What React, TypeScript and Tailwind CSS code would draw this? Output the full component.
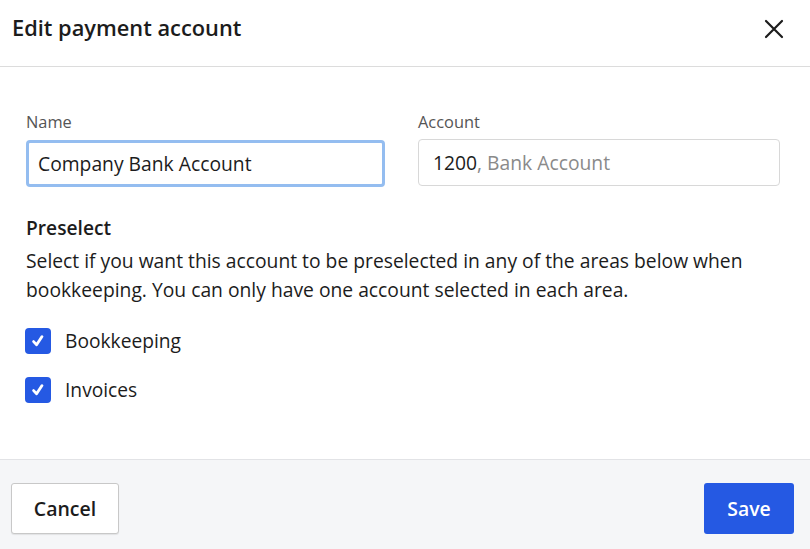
import React from "react";

export default function App() {
  return (
    <div
      className="w-[810px] h-[549px] bg-white flex flex-col text-[#1c1c1c] overflow-hidden"
      style={{ fontFamily: '"Open Sans", sans-serif' }}
    >
      <div className="h-[67px] flex items-center justify-between pl-[12px] pr-[25px] border-b border-[#dcdcdc] shrink-0">
        <h1 className="text-[21.8px] font-semibold leading-none -mt-[10px]">Edit payment account</h1>
        <button className="w-[22px] h-[22px] flex items-center justify-center -mt-[8px]" aria-label="Close">
          <svg width="20" height="20" viewBox="0 0 20 20" fill="none" stroke="#1c1c1c" strokeWidth="2.2" strokeLinecap="round">
            <path d="M2 2 L18 18 M18 2 L2 18" />
          </svg>
        </button>
      </div>

      <div className="flex-1 px-[26px] pt-[45px]">
        <div className="flex gap-[33px]">
          <div className="w-[359px] flex flex-col">
            <label className="text-[16.4px] text-[#555] leading-[20px] mb-[8px]">Name</label>
            <div className="h-[47px] rounded-[4px] border-[3px] border-[#94bdf0] flex items-center pl-[9px] pt-[1px] text-[19.3px] text-[#1c1c1c]">
              Company Bank Account
            </div>
          </div>
          <div className="w-[362px] flex flex-col">
            <label className="text-[16.4px] text-[#555] leading-[20px] mb-[7px]">Account</label>
            <div className="h-[47px] rounded-[4px] border border-[#d8d8d8] flex items-center pl-[14px] pt-[1px] text-[19.3px]">
              <span className="text-[#1c1c1c]">1200</span>
              <span className="text-[#8a8a8a]">, Bank Account</span>
            </div>
          </div>
        </div>

        <div className="mt-[29px] text-[19.2px] font-semibold leading-[24px]">Preselect</div>
        <p className="mt-[6px] text-[19.3px] leading-[29px] text-[#1c1c1c]">
          Select if you want this account to be preselected in any of the areas below when bookkeeping. You can only have one account selected in each area.
        </p>

        <div className="mt-[24px] flex flex-col gap-[23px]">
          {["Bookkeeping", "Invoices"].map((l) => (
            <div key={l} className="flex items-center gap-[14px] -ml-[1px]">
              <div className="w-[26px] h-[26px] rounded-[4px] bg-[#2559e3] flex items-center justify-center">
                <svg width="18" height="18" viewBox="0 0 18 18" fill="none" stroke="white" strokeWidth="2.8" strokeLinecap="round" strokeLinejoin="round">
                  <path d="M4.6 9.6 L7.6 12.8 L13 4.6" />
                </svg>
              </div>
              <span className="text-[19.2px] leading-[26px]">{l}</span>
            </div>
          ))}
        </div>
      </div>

      <div className="h-[90px] shrink-0 bg-[#f5f6f8] border-t border-[#e2e3e6] flex items-start justify-between pl-[11px] pr-[16px] pt-[23px]">
        <button className="w-[108px] h-[51px] bg-white border border-[#c8c8c8] rounded-[3px] text-[19.5px] font-semibold text-[#1c1c1c] shadow-[0_1px_1px_rgba(0,0,0,0.08)]">
          Cancel
        </button>
        <button className="w-[90px] h-[51px] bg-[#2559e3] rounded-[3px] text-[19.4px] font-semibold text-white">
          Save
        </button>
      </div>
    </div>
  );
}
